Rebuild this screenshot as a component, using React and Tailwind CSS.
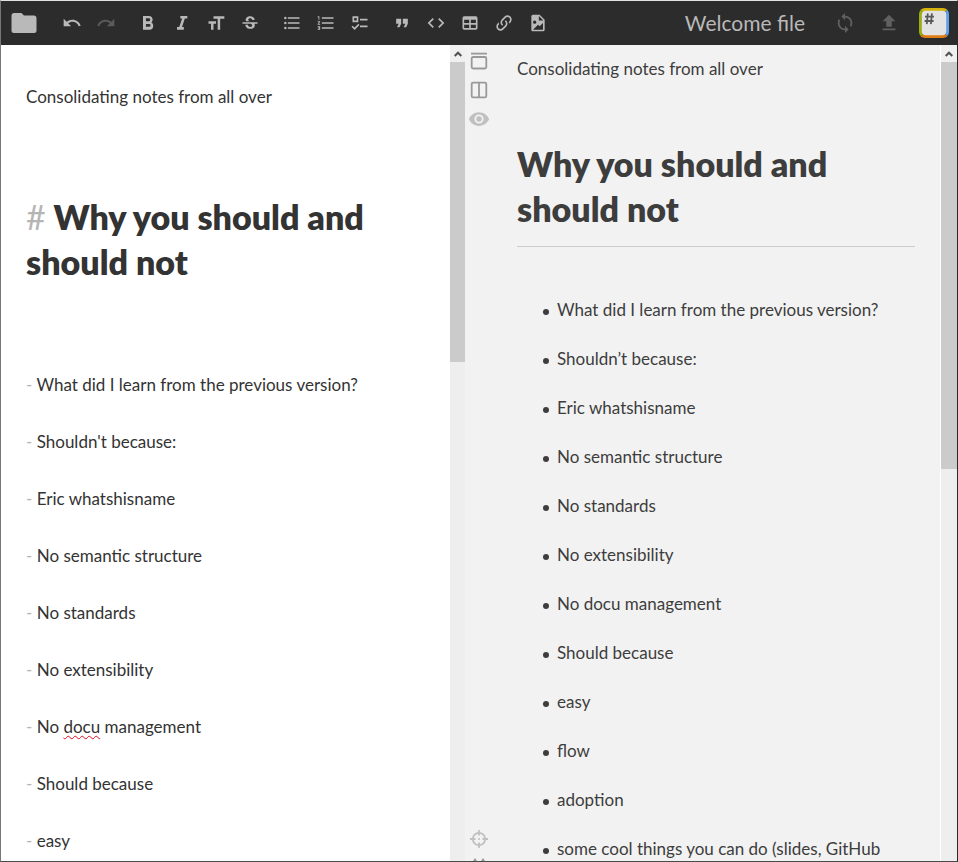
import React from "react";

const icons = {
  folder: "M10,4H4C2.89,4 2,4.89 2,6V18A2,2 0 0,0 4,20H20A2,2 0 0,0 22,18V8C22,6.89 21.1,6 20,6H12L10,4Z",
  undo: "M12.5,8C9.85,8 7.45,9 5.6,10.6L2,7V16H11L7.38,12.38C8.77,11.22 10.54,10.5 12.5,10.5C16.04,10.5 19.05,12.81 20.1,16L22.47,15.22C21.08,11.03 17.15,8 12.5,8Z",
  redo: "M18.4,10.6C16.55,9 14.15,8 11.5,8C6.85,8 2.92,11.03 1.54,15.22L3.9,16C4.95,12.81 7.95,10.5 11.5,10.5C13.45,10.5 15.23,11.22 16.62,12.38L13,16H22V7L18.4,10.6Z",
  bold: "M13.5,16.5H9.5V13.3H13.5A1.6,1.6 0 0,1 13.5,16.5M9.5,6.3H13A1.6,1.6 0 0,1 13,9.8H9.5M15.8,11.2C16.9,10.5 17.6,9.3 17.6,8C17.6,5.4 15.7,3.5 13.25,3.5H6V20H14.04C16.5,20 18.3,18 18.3,15.5C18.3,13.6 17.4,12 15.8,11.2Z",
  italic: "M10,3.5V6.6H12.2L8.7,16.9H6V20H14.2V16.9H12L15.4,6.6H18.4V3.5H10Z",
  size: "M3,13H6V20H9V13H12V10H3M9,4V7H14V20H17V7H22V4H9Z",
  strike: "M7.2,9.8C6,7.5 7.7,4.8 10.1,4.3C13.2,3.3 17.7,4.7 17.6,8.5H14.6C14.6,8.2 14.5,7.9 14.5,7.7C14.3,7.1 13.9,6.8 13.3,6.6C12.5,6.3 11.2,6.3 10.5,6.9C9,8.2 10.4,9.5 12,10H7.4C7.3,9.9 7.3,9.8 7.2,9.8M21,13V11H3V13H12.6C12.8,13.1 13,13.1 13.2,13.2C13.8,13.5 14.3,13.7 14.5,14.3C14.6,14.7 14.7,15.2 14.5,15.6C14.3,16.1 13.9,16.3 13.4,16.5C11.6,17 9.4,16.3 9.5,14.1H6.5C6.4,16.7 8.6,18.5 11,18.8C14.8,19.6 19.3,17.2 17.3,12.9L21,13Z",
  bullets: "M7,5H21V7H7V5M7,13V11H21V13H7M4,4.5A1.5,1.5 0 0,1 4,7.5A1.5,1.5 0 0,1 4,4.5M4,10.5A1.5,1.5 0 0,1 4,13.5A1.5,1.5 0 0,1 4,10.5M7,19V17H21V19H7M4,16.5A1.5,1.5 0 0,1 4,19.5A1.5,1.5 0 0,1 4,16.5Z",
  numbers: "M7,13H21V11H7M7,19H21V17H7M7,7H21V5H7M2,11H3.8L2,13.1V14H5V13H3.2L5,10.9V10H2M3,8H4V4H2V5H3M2,17H4V17.5H3V18.5H4V19H2V20H5V16H2V17Z",
  checks: "M3,4H10V11H3V4M5,6V9H8V6H5M12,7H21V9H12V7M12,15H21V17H12V15M5.5,20.3L1.8,16.6L3.2,15.2L5.5,17.5L10,13L11.4,14.4L5.5,20.3Z",
  quote: "M14,17H17L19,13V7H13V13H16M6,17H9L11,13V7H5V13H8L6,17Z",
  code: "M14.6,16.6L19.2,12L14.6,7.4L16,6L22,12L16,18L14.6,16.6M9.4,16.6L4.8,12L9.4,7.4L8,6L2,12L8,18L9.4,16.6Z",
  table: "M5,4H19A2,2 0 0,1 21,6V18A2,2 0 0,1 19,20H5A2,2 0 0,1 3,18V6A2,2 0 0,1 5,4M5,8V12H11V8H5M13,8V12H19V8H13M5,14V18H11V14H5M13,14V18H19V14H13Z",
  link: "M10.59,13.41C11,13.8 11,14.44 10.59,14.83C10.2,15.22 9.56,15.22 9.17,14.83C7.22,12.88 7.22,9.71 9.17,7.76V7.76L12.71,4.22C14.66,2.27 17.83,2.27 19.78,4.22C21.73,6.17 21.73,9.34 19.78,11.29L18.29,12.78C18.3,11.96 18.17,11.14 17.89,10.36L18.36,9.88C19.54,8.71 19.54,6.81 18.36,5.64C17.19,4.46 15.29,4.46 14.12,5.64L10.59,9.17C9.41,10.34 9.41,12.24 10.59,13.41M13.41,9.17C13.8,8.78 14.44,8.78 14.83,9.17C16.78,11.12 16.78,14.29 14.83,16.24V16.24L11.29,19.78C9.34,21.73 6.17,21.73 4.22,19.78C2.27,17.83 2.27,14.66 4.22,12.71L5.71,11.22C5.7,12.04 5.83,12.86 6.11,13.65L5.64,14.12C4.46,15.29 4.46,17.19 5.64,18.36C6.81,19.54 8.71,19.54 9.88,18.36L13.41,14.83C14.59,13.66 14.59,11.76 13.41,10.59C13,10.2 13,9.56 13.41,9.17Z",
  image: "M13,9H18.5L13,3.5V9M6,2H14L20,8V20A2,2 0 0,1 18,22H6C4.89,22 4,21.1 4,20V4C4,2.89 4.89,2 6,2M6,20H18V12L14,16L12,14L6,20M8,9A2,2 0 0,0 6,11A2,2 0 0,0 8,13A2,2 0 0,0 10,11A2,2 0 0,0 8,9Z",
  sync: "M12,18A6,6 0 0,1 6,12C6,11 6.25,10.03 6.7,9.2L5.24,7.74C4.46,8.97 4,10.43 4,12A8,8 0 0,0 12,20V23L16,19L12,15M12,4V1L8,5L12,9V6A6,6 0 0,1 18,12C18,13 17.75,13.97 17.3,14.8L18.76,16.26C19.54,15.03 20,13.57 20,12A8,8 0 0,0 12,4Z",
  upload: "M9,16V10H5L12,3L19,10H15V16H9M5,20V18H19V20H5Z",
  eye: "M12,9A3,3 0 0,0 9,12A3,3 0 0,0 12,15A3,3 0 0,0 15,12A3,3 0 0,0 12,9M12,17A5,5 0 0,1 7,12A5,5 0 0,1 12,7A5,5 0 0,1 17,12A5,5 0 0,1 12,17M12,4.5C7,4.5 2.73,7.61 1,12C2.73,16.39 7,19.5 12,19.5C17,19.5 21.27,16.39 23,12C21.27,7.61 17,4.5 12,4.5Z",
};

function Icon({ name, className = "size-5" }) {
  return (
    <svg viewBox="0 0 24 24" fill="currentColor" fillRule="evenodd" aria-hidden="true" className={className}>
      <path d={icons[name]} />
    </svg>
  );
}

function ToolButton({ name, label, className = "" }) {
  return (
    <button type="button" aria-label={label} className={`flex h-9 w-[34px] shrink-0 items-center justify-center ${className}`}>
      <Icon name={name} />
    </button>
  );
}

function Navbar() {
  return (
    <header className="flex h-11 shrink-0 items-center bg-[#2c2c2c] text-[#b9b9b9]">
      <button type="button" aria-label="Toggle explorer" className="ml-2 flex size-[30px] shrink-0 items-center justify-center">
        <Icon name="folder" className="size-[30px]" />
      </button>
      <div className="ml-4 flex">
        <ToolButton name="undo" label="Undo" />
        <ToolButton name="redo" label="Redo" className="text-[#5a5a5a]" />
      </div>
      <div className="ml-2 flex">
        <ToolButton name="bold" label="Bold" />
        <ToolButton name="italic" label="Italic" />
        <ToolButton name="size" label="Heading" />
        <ToolButton name="strike" label="Strikethrough" />
      </div>
      <div className="ml-2 flex">
        <ToolButton name="bullets" label="Unordered list" />
        <ToolButton name="numbers" label="Ordered list" />
        <ToolButton name="checks" label="Check list" />
      </div>
      <div className="ml-2 flex">
        <ToolButton name="quote" label="Blockquote" />
        <ToolButton name="code" label="Code" />
        <ToolButton name="table" label="Table" />
        <ToolButton name="link" label="Link" />
        <ToolButton name="image" label="Image" />
      </div>
      <div className="ml-auto text-[21px] leading-9 whitespace-nowrap">Welcome file</div>
      <button type="button" aria-label="Synchronize" className="ml-[22px] flex size-9 shrink-0 items-center justify-center text-[#606060]">
        <Icon name="sync" className="size-[22px]" />
      </button>
      <button type="button" aria-label="Publish" className="ml-2 flex size-9 shrink-0 items-center justify-center text-[#606060]">
        <Icon name="upload" className="size-[22px]" />
      </button>
      <button type="button" aria-label="Toggle side bar" className="mr-2 ml-3 size-[30px] shrink-0">
        <svg viewBox="0 0 30 30" aria-hidden="true" className="size-full">
          <defs>
            <clipPath id="logo-clip">
              <rect width="30" height="30" rx="6" />
            </clipPath>
          </defs>
          <g clipPath="url(#logo-clip)">
            <path fill="#d6b30a" d="M0 0H30L15 15Z" />
            <path fill="#5f9fe8" d="M30 0V30L15 15Z" />
            <path fill="#e07c14" d="M0 30H30L15 15Z" />
            <path fill="#9aad12" d="M0 0V30L15 15Z" />
          </g>
          <rect x="2.8" y="2.8" width="24.4" height="24.4" rx="4" fill="#e3e3e3" />
          <path stroke="#5a5a5a" strokeWidth="1.8" d="M8.8 5.3L7.8 16.2M12.9 5.3L11.9 16.2M6 8.6H15M5.6 13H14.6" />
        </svg>
      </button>
    </header>
  );
}

function Scrollbar({ label, className, thumb }) {
  return (
    <div className={`flex shrink-0 flex-col bg-[#eeeeee] ${className}`}>
      <button type="button" aria-label={label} className="flex h-[17px] w-full shrink-0 items-center justify-center bg-[#f0f0f0] text-[#505050]">
        <svg viewBox="0 0 8 6" fill="none" stroke="currentColor" strokeWidth="2" aria-hidden="true" className="h-1.5 w-2">
          <path d="M0.7 5L4 1.7L7.3 5" />
        </svg>
      </button>
      <div className={`w-full bg-[#cbcbcb] ${thumb}`} />
    </div>
  );
}

const editorItems = [
  "What did I learn from the previous version?",
  "Shouldn't because:",
  "Eric whatshisname",
  "No semantic structure",
  "No standards",
  "No extensibility",
  "No docu management",
  "Should because",
  "easy",
];

const previewItems = [
  "What did I learn from the previous version?",
  "Shouldn’t because:",
  "Eric whatshisname",
  "No semantic structure",
  "No standards",
  "No extensibility",
  "No docu management",
  "Should because",
  "easy",
  "flow",
  "adoption",
  "some cool things you can do (slides, GitHub",
];

function EditorText({ text }) {
  const [before, after] = text.split("docu");
  if (after === undefined) return text;
  return (
    <>
      {before}
      <span className="underline decoration-[#e01020] decoration-wavy decoration-1 underline-offset-2">docu</span>
      {after}
    </>
  );
}

function Editor() {
  return (
    <section className="flex min-w-0 flex-1 bg-white">
      <div
        role="textbox"
        aria-multiline="true"
        aria-label="Markdown editor"
        contentEditable
        suppressContentEditableWarning
        spellCheck={false}
        className="min-w-0 flex-1 overflow-hidden px-[25px] pt-[38px] text-[17px] leading-7 outline-none"
      >
        <p>Consolidating notes from all over</p>
        <h1 className="mt-[83px] text-[34px] leading-[45px] font-extrabold">
          <span className="font-normal text-[#b5b5b5]">#</span> Why you should and should not
        </h1>
        <div className="mt-[72px]">
          {editorItems.map((t) => (
            <p key={t} className="h-[57px] leading-[57px]">
              <span className="text-[#b5b5b5]">-</span> <EditorText text={t} />
            </p>
          ))}
        </div>
      </div>
      <Scrollbar label="Scroll editor up" className="w-[15px]" thumb="h-[300px]" />
    </section>
  );
}

function ButtonBar() {
  return (
    <nav aria-label="View" className="flex w-7 shrink-0 flex-col items-center gap-[9px] pt-[6px] text-[#999999]">
      <button type="button" aria-label="Toggle navigation bar" className="size-5 shrink-0">
        <svg viewBox="0 0 20 20" fill="none" stroke="currentColor" strokeWidth="1.8" aria-hidden="true" className="size-full">
          <path d="M2 2.6H18" />
          <rect x="2.7" y="6" width="14.6" height="11.5" rx="1.4" />
        </svg>
      </button>
      <button type="button" aria-label="Toggle side preview" className="size-5 shrink-0">
        <svg viewBox="0 0 20 20" fill="none" stroke="currentColor" strokeWidth="1.8" aria-hidden="true" className="size-full">
          <rect x="2.7" y="2.7" width="14.6" height="14.6" rx="1.4" />
          <path d="M10 2.7V17.3" />
        </svg>
      </button>
      <button type="button" aria-label="Reader mode" className="flex h-5 w-[22px] shrink-0 items-center justify-center text-[#c0c0c0]">
        <Icon name="eye" className="size-[22px] shrink-0" />
      </button>
      <button type="button" aria-label="Toggle focus mode" className="mt-auto size-5 shrink-0 text-[#c0c0c0]">
        <svg viewBox="0 0 20 20" fill="none" stroke="currentColor" strokeWidth="1.8" aria-hidden="true" className="size-full">
          <circle cx="10" cy="10" r="6.2" />
          <path d="M10 1V6.5M10 13.5V19M1 10H6.5M13.5 10H19" />
          <path d="M9.2 10H10.8" />
        </svg>
      </button>
      <button type="button" aria-label="Toggle scroll sync" className="h-[3px] w-5 shrink-0 overflow-hidden">
        <svg viewBox="0 0 20 20" fill="none" stroke="currentColor" strokeWidth="2" aria-hidden="true" className="size-5">
          <path d="M4.5 4L6 1.8L7.5 4M12.5 4L14 1.8L15.5 4" />
        </svg>
      </button>
    </nav>
  );
}

function Preview() {
  return (
    <section className="flex min-w-0 flex-1 text-[#3d3d3d]">
      <article className="min-w-0 flex-1 overflow-hidden pt-[10px] pr-[25px] pl-6 text-[17px] leading-7">
        <p>Consolidating notes from all over</p>
        <h1 className="mt-[58px] border-b border-[#cccccc] pb-[15px] text-[34px] leading-[45px] font-extrabold">
          Why you should and should not
        </h1>
        <ul className="mt-[38px] pl-[26px]">
          {previewItems.map((t) => (
            <li
              key={t}
              className="flex h-[49px] items-center whitespace-nowrap before:mt-1 before:mr-2 before:size-1.5 before:rounded-full before:bg-[#3d3d3d]"
            >
              {t}
            </li>
          ))}
        </ul>
      </article>
      <Scrollbar label="Scroll preview up" className="w-[17px] border-l border-white" thumb="h-[407px]" />
    </section>
  );
}

export default function App() {
  return (
    <div className="flex h-screen flex-col overflow-hidden border border-t-[#dfe3e2] border-r-[#2a2a2a] border-b-[#4a4a4a] border-l-[#777777] bg-[#f2f2f2] font-[Lato,sans-serif] text-[#333333]">
      <Navbar />
      <main className="flex min-h-0 flex-1">
        <Editor />
        <ButtonBar />
        <Preview />
      </main>
    </div>
  );
}
